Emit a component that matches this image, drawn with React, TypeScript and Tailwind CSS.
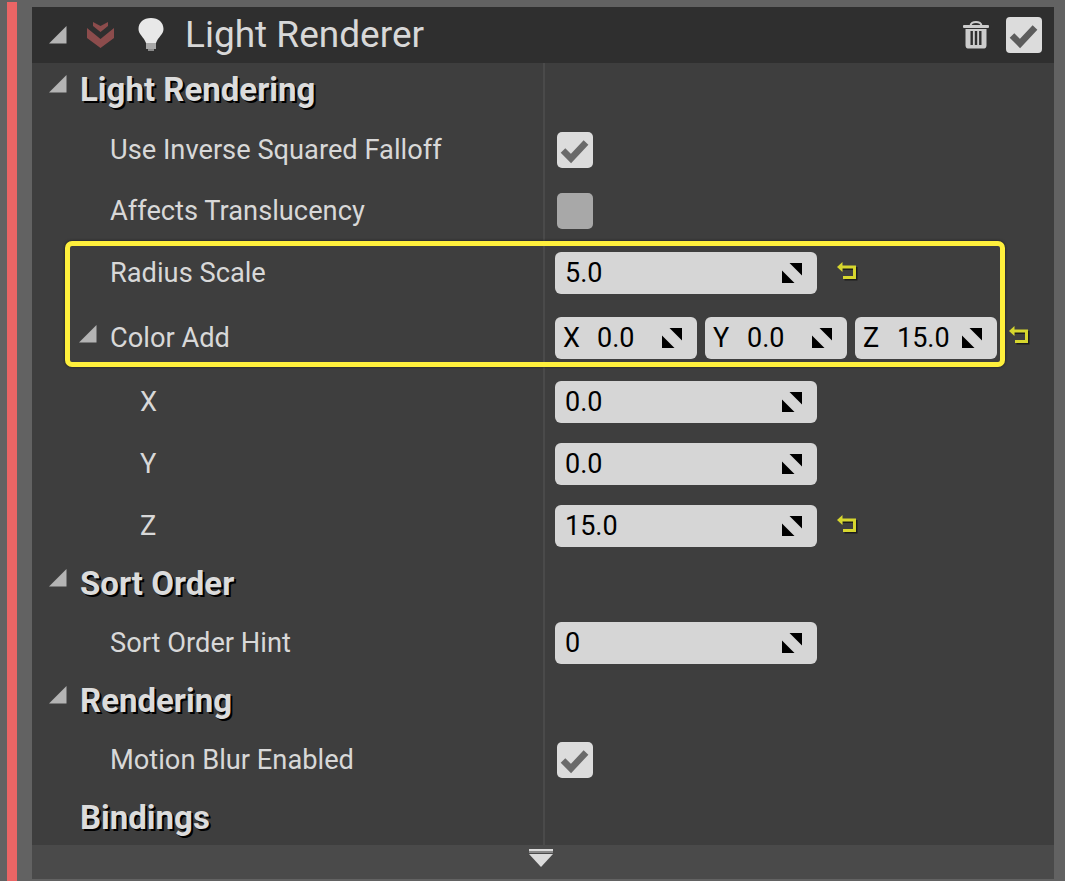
import React from "react";

const Tri = ({ className = "" }: { className?: string }) => (
  <svg width="20" height="20" viewBox="0 0 20 20" className={className}>
    <polygon points="1,18.500 18.500,18.500 18.500,1" fill="#b4b4b4" />
  </svg>
);

const Check = ({ color }: { color: string }) => (
  <svg width="36" height="36" viewBox="0 0 36 36">
    <path d="M6 18.500 L14 26.500 L29 10.500" fill="none" stroke={color} strokeWidth="6.500" />
  </svg>
);

const CheckBox = ({ checked = false }: { checked?: boolean }) => (
  <div className={`w-[36px] h-[36px] rounded-[5px] ${checked ? "bg-[#dcdcdc]" : "bg-[#a8a8a8]"}`}>
    {checked && <Check color="#6a6a6a" />}
  </div>
);

const Spin = () => (
  <svg width="22" height="22" viewBox="0 0 22 22" className="shrink-0">
    <polygon points="8.500,1 21,1 21,13.500" fill="#000" />
    <polygon points="1,8.500 1,21 13.500,21" fill="#000" />
  </svg>
);

const Reset = () => (
  <svg width="22" height="20" viewBox="0 0 22 20">
    <path d="M4 5 H17.500 V15.500 H6" fill="none" stroke="#1c1c1c" strokeWidth="3" transform="translate(1.500 1.500)" />
    <path d="M4 5 H17.500 V15.500 H6" fill="none" stroke="#d6d62e" strokeWidth="3" />
    <polygon points="0,5 5.500,0 5.500,10" fill="#d6d62e" />
  </svg>
);

const Num = ({ v, w = "w-[262px]", label }: { v: string; w?: string; label?: string }) => (
  <div className={`${w} h-[42px] rounded-[6px] bg-[#d6d6d6] flex items-center text-[27px] text-black shrink-0 ${label ? "pl-[8px] pr-[14px]" : "pl-[10px] pr-[14px]"}`}>
    {label && <span className="w-[34px]">{label}</span>}
    <span className="flex-1">{v}</span>
    <Spin />
  </div>
);

const Row = ({
  h,
  label,
  indent = "pl-[78px]",
  tri = false,
  nudge = false,
  children,
}: {
  h: string;
  label: string;
  indent?: string;
  tri?: boolean;
  nudge?: boolean;
  children?: React.ReactNode;
}) => (
  <div className={`flex items-center ${h}`}>
    <div className={`w-[511px] relative text-[27.25px] text-[#d8d8d8] ${indent} ${nudge ? "pt-[2px]" : ""}`}>
      {tri && <Tri className="absolute left-[46px] top-[8px]" />}
      {label}
    </div>
    <div className="w-[2px] self-stretch bg-[#4a4a4a]" />
    <div className={`flex items-center pl-[10px] ${nudge ? "pt-[2px]" : ""}`}>{children}</div>
  </div>
);

const Head = ({ h, label, tri = true, pad = "" }: { h: string; label: string; tri?: boolean; pad?: string }) => (
  <div className={`flex items-center ${h}`}>
    <div className={`w-[511px] relative pl-[48px] text-[33px] font-bold text-[#dcdcdc] [text-shadow:2px_2px_0_#000] flex items-center ${pad}`}>
      {tri && <Tri className="absolute left-[16px] top-[9px]" />}
      {label}
    </div>
    <div className="w-[2px] self-stretch bg-[#4a4a4a]" />
  </div>
);

export default function App() {
  return (
    <div className="relative w-[1065px] h-[881px] overflow-hidden bg-[#626262] font-['Roboto',sans-serif] flex">
      <div className="w-[7px]" />
      <div className="w-[10px] mt-[2px] bg-[#ea6565]" />
      <div className="w-[15px]" />
      <div className="w-[1022px] mt-[7px] h-[872px] flex flex-col bg-[#3e3e3e]">
        <div className="h-[56px] bg-[#2f2f2f] flex items-center relative shrink-0">
          <Tri className="ml-[16px]" />
          <svg width="27" height="26" viewBox="0 0 27 26" className="ml-[19px]">
            <path d="M6 0 L13.500 4 L21 0 L21 4 L13.500 10 L6 4 Z" fill="#8c4c4c" />
            <path d="M0 6 L13.500 17 L27 6 L27 16 L13.500 26 L0 16 Z" fill="#8c4c4c" />
          </svg>
          <svg width="26" height="36" viewBox="0 0 26 36" className="ml-[24px]">
            <path d="M13 1 C20.500 1 25.500 5.500 25.500 12 C25.500 17.500 20 20 18 26 L8 26 C6 20 0.500 17.500 0.500 12 C0.500 5.500 5.500 1 13 1 Z" fill="#e8e8e8" />
            <rect x="8" y="26" width="10" height="6" fill="#a8a8a8" />
            <rect x="10" y="32" width="6" height="2" fill="#8a8a8a" />
          </svg>
          <span className="ml-[21px] text-[37px] text-[#d8d8d8]">Light Renderer</span>
          <div className="ml-auto flex items-center gap-[17px] pr-[12px]">
            <svg width="26" height="30" viewBox="0 0 26 30">
              <path d="M7.500 6 C7.500 0.500 18.500 0.500 18.500 6" fill="none" stroke="#cccccc" strokeWidth="2" />
              <rect x="0" y="5" width="26" height="3" rx="1" fill="#cccccc" />
              <path d="M2.500 9 H23.500 V25 C23.500 28 22 28.500 20 28.500 H6 C4 28.500 2.500 28 2.500 25 Z" fill="#cccccc" />
              <rect x="7.500" y="11" width="2.400" height="14" fill="#2f2f2f" />
              <rect x="11.800" y="11" width="2.400" height="14" fill="#2f2f2f" />
              <rect x="16.100" y="11" width="2.400" height="14" fill="#2f2f2f" />
            </svg>
            <div className="w-[36px] h-[36px] rounded-[4px] bg-[#dcdcdc]">
              <Check color="#5c5c5c" />
            </div>
          </div>
        </div>

        <Head h="h-[57px]" label="Light Rendering" pad="pb-[4px]" />
        <Row h="h-[60px]" label="Use Inverse Squared Falloff">
          <div className="pl-[2px]"><CheckBox checked /></div>
        </Row>
        <Row h="h-[62px]" label="Affects Translucency">
          <div className="pl-[2px]"><CheckBox /></div>
        </Row>
        <Row h="h-[62px]" label="Radius Scale">
          <Num v="5.0" />
          <div className="ml-[20px] mt-[-2px]"><Reset /></div>
        </Row>
        <Row h="h-[66px]" label="Color Add" tri nudge>
          <div className="flex">
            <Num v="0.0" w="w-[142px]" label="X" />
            <div className="ml-[8px]"><Num v="0.0" w="w-[142px]" label="Y" /></div>
            <div className="ml-[8px]"><Num v="15.0" w="w-[142px]" label="Z" /></div>
          </div>
          <div className="ml-[12px] mt-[-4px]"><Reset /></div>
        </Row>
        <Row h="h-[62px]" label="X" indent="pl-[108px]" nudge><Num v="0.0" /></Row>
        <Row h="h-[62px]" label="Y" indent="pl-[108px]" nudge><Num v="0.0" /></Row>
        <Row h="h-[62px]" label="Z" indent="pl-[108px]" nudge>
          <Num v="15.0" />
          <div className="ml-[20px] mt-[-2px]"><Reset /></div>
        </Row>
        <Head h="h-[56px]" label="Sort Order" />
        <Row h="h-[60px]" label="Sort Order Hint" nudge><Num v="0" /></Row>
        <Head h="h-[58px]" label="Rendering" />
        <Row h="h-[58px]" label="Motion Blur Enabled" nudge>
          <div className="pl-[2px]"><CheckBox checked /></div>
        </Row>
        <Head h="h-[57px]" label="Bindings" tri={false} pad="pt-[2px]" />

        <div className="flex-1 bg-[#4a4a4a] flex justify-center pt-[4px] pr-[5px]">
          <svg width="24" height="20" viewBox="0 0 24 20">
            <rect x="0" y="0" width="24" height="2" fill="#dcdcdc" />
            <rect x="0" y="2" width="24" height="2" fill="#8a8a8a" />
            <polygon points="0,5 24,5 12,18" fill="#dcdcdc" />
          </svg>
        </div>
      </div>
      <div className="absolute left-[65px] top-[241px] w-[940px] h-[126px] border-[5px] border-[#fff03c] rounded-[7px] shadow-[0_0_3px_#1a1a1a]" />
    </div>
  );
}
